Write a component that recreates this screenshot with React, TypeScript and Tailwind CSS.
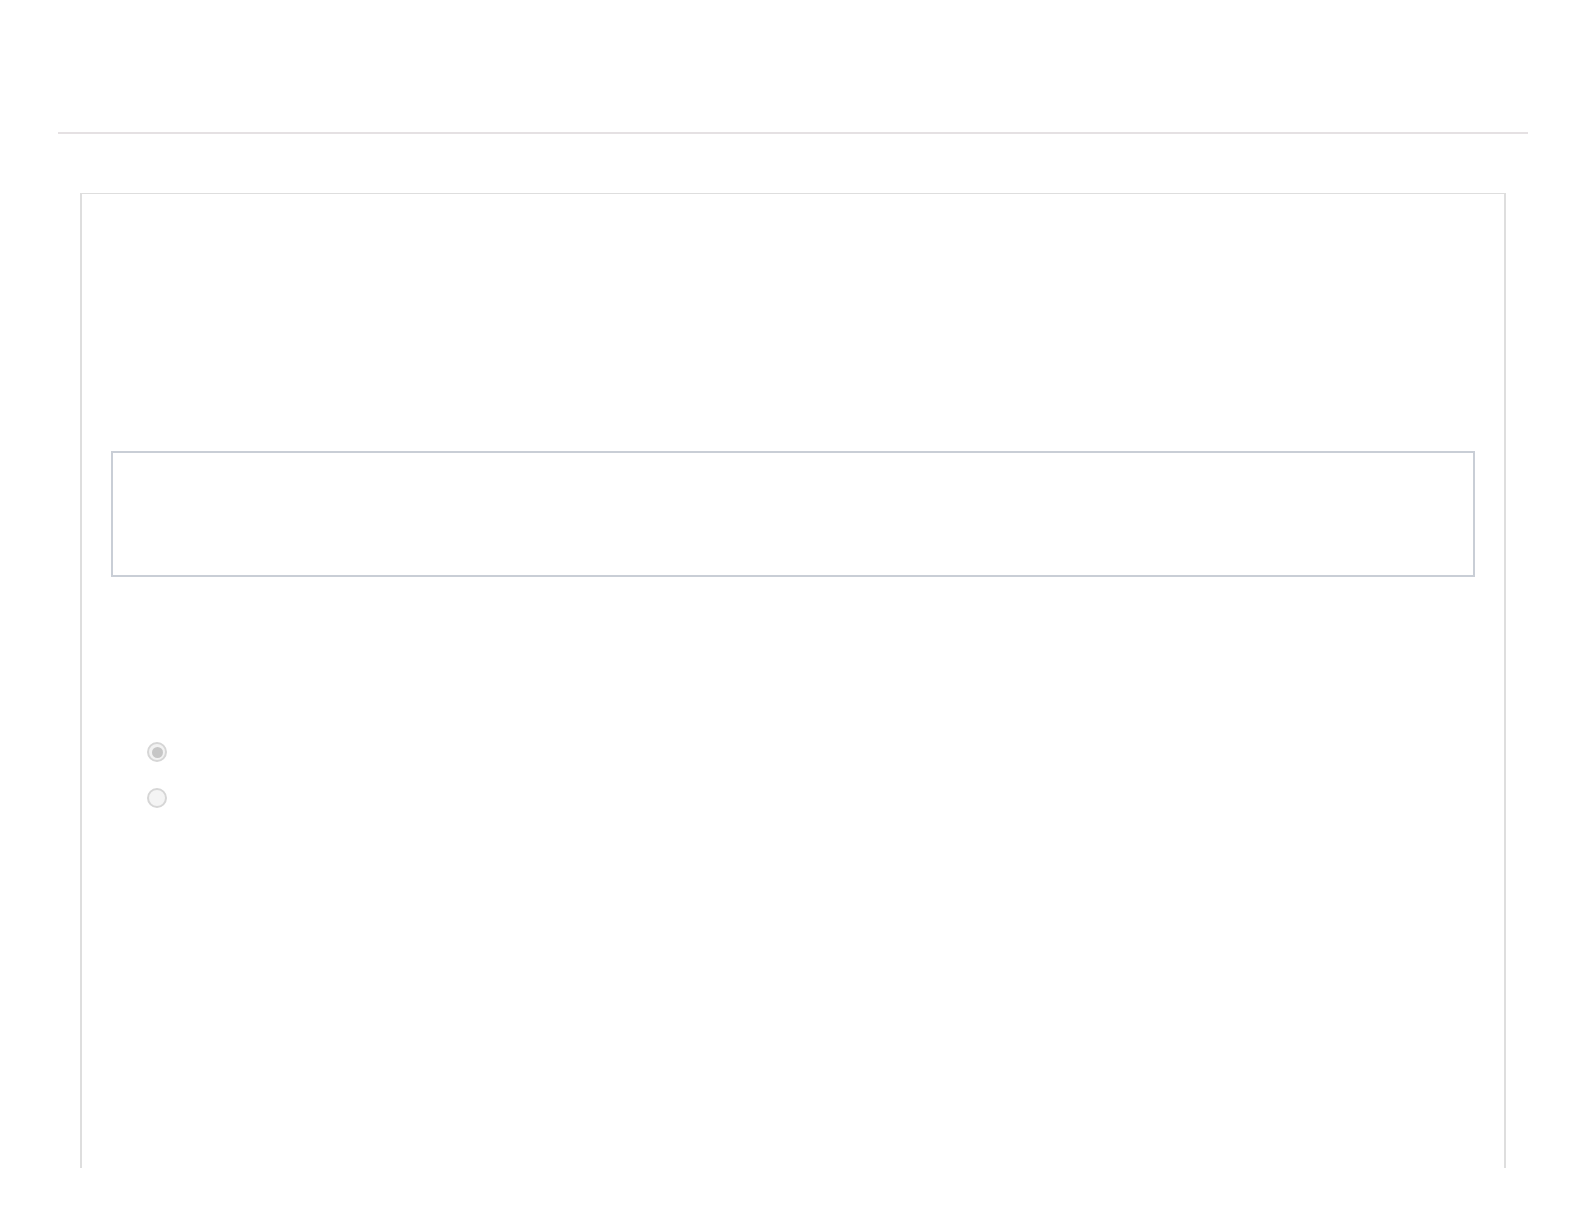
export default function App() {
  return (
    <div className="w-[1584px] h-[1224px] bg-white overflow-hidden" style={{ fontFamily: '"Liberation Sans", Arial, sans-serif' }}>
      <div className="pt-[132px]">
        <div className="ml-[58px] w-[1470px] h-[2px] bg-[#e5e1e3]" />
        <div className="mt-[59px] ml-[80px] w-[1426px] h-[975px] border-t border-x-2 border-[#dedede] px-[29px] pt-[257px]">
          <div className="w-[1364px] h-[126px] border-2 border-[#c9ced6]" />
          <div className="mt-[165px] pl-[36px] flex flex-col gap-[26px]">
            <div className="flex items-center">
              <span className="w-[20px] h-[20px] rounded-full border-2 border-[#d6d6d6] bg-[#f2f2f2] flex items-center justify-center">
                <span className="w-[11px] h-[11px] rounded-full bg-[#c6c6c6]" />
              </span>
            </div>
            <div className="flex items-center">
              <span className="w-[20px] h-[20px] rounded-full border-2 border-[#d6d6d6] bg-[#f4f4f4]" />
            </div>
          </div>
        </div>
      </div>
    </div>
  );
}
